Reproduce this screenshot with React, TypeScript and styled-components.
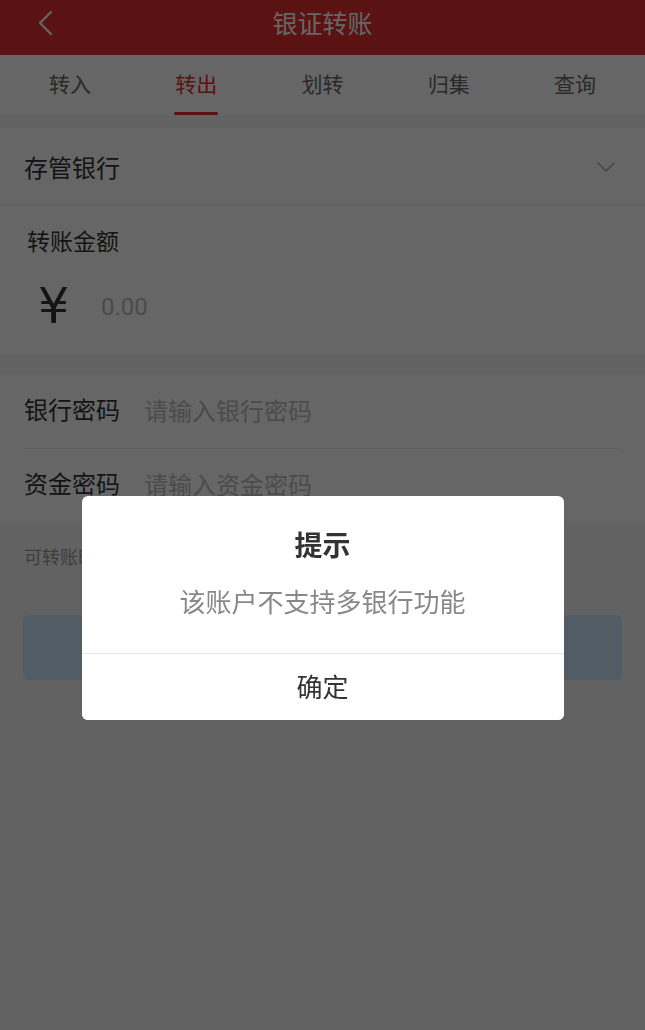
import React, { useState } from "react"
import styled, { createGlobalStyle } from "styled-components"

const tabs = ["转入", "转出", "划转", "归集", "查询"]

export default function App() {
  const [active, setActive] = useState(1)
  const [showTip, setShowTip] = useState(true)

  return (
    <>
      <GlobalStyle />
      <S.Page>
        <S.Header>
          <S.BackButton aria-label="返回">
            <svg width="16" height="26" viewBox="0 0 16 26" fill="none">
              <path d="M14 2 L3 13 L14 24" stroke="#fff" strokeWidth="2.2" strokeLinecap="round" strokeLinejoin="round" />
            </svg>
          </S.BackButton>
          <S.Title>银证转账</S.Title>
          <span />
        </S.Header>

        <S.Tabs>
          {tabs.map((t, i) => (
            <S.Tab key={t} $active={i === active} onClick={() => setActive(i)}>
              <span>{t}</span>
              <S.TabBar $active={i === active} />
            </S.Tab>
          ))}
        </S.Tabs>

        <S.BankRow>
          <S.Label>存管银行</S.Label>
          <svg width="18" height="10" viewBox="0 0 18 10" fill="none">
            <path d="M1 1 L9 9 L17 1" stroke="#aaa" strokeWidth="1.5" strokeLinecap="round" strokeLinejoin="round" />
          </svg>
        </S.BankRow>

        <S.AmountSection>
          <S.AmountLabel>转账金额</S.AmountLabel>
          <S.AmountRow>
            <S.Yen>¥</S.Yen>
            <S.AmountInput placeholder="0.00" />
          </S.AmountRow>
        </S.AmountSection>

        <S.PasswordSection>
          <S.FieldRow>
            <S.Label>银行密码</S.Label>
            <S.TextInput type="password" placeholder="请输入银行密码" />
          </S.FieldRow>
          <S.Divider />
          <S.FieldRow>
            <S.Label>资金密码</S.Label>
            <S.TextInput type="password" placeholder="请输入资金密码" />
          </S.FieldRow>
        </S.PasswordSection>

        <S.Hint>可转账时间：交易日 9:00-16:00</S.Hint>
        <S.SubmitButton disabled>转出</S.SubmitButton>
      </S.Page>

      {showTip && (
        <S.Mask>
          <S.Dialog>
            <S.DialogBody>
              <S.DialogTitle>提示</S.DialogTitle>
              <S.DialogMessage>该账户不支持多银行功能</S.DialogMessage>
            </S.DialogBody>
            <S.DialogButton onClick={() => setShowTip(false)}>确定</S.DialogButton>
          </S.Dialog>
        </S.Mask>
      )}
    </>
  )
}

const GlobalStyle = createGlobalStyle`
  html, body {
    margin: 0;
    padding: 0;
    background: #f5f5f5;
    font-family: "Noto Sans CJK SC", "Noto Sans", sans-serif;
    color: #333;
  }
  * { box-sizing: border-box; }
  input::placeholder { color: #bbb; }
`

const S = {
  Page: styled.div`
    min-height: 1030px;
    background: #f5f5f5;
    display: flex;
    flex-direction: column;
  `,
  Header: styled.header`
    height: 55px;
    background: #e02e2e;
    display: grid;
    grid-template-columns: 1fr auto 1fr;
    align-items: center;
  `,
  BackButton: styled.button`
    justify-self: start;
    margin-left: 37px;
    margin-top: -10px;
    padding: 0;
    border: none;
    background: none;
    display: flex;
  `,
  Title: styled.h1`
    margin: 0 0 12px;
    font-size: 25px;
    font-weight: 400;
    color: #fff;
  `,
  Tabs: styled.nav`
    height: 60px;
    padding: 0 7px;
    background: #fff;
    display: grid;
    grid-template-columns: repeat(5, 1fr);
  `,
  Tab: styled.div<{ $active: boolean }>`
    display: flex;
    flex-direction: column;
    align-items: center;
    padding-top: 13px;
    font-size: 21px;
    line-height: 30px;
    color: ${(p) => (p.$active ? "#e02e2e" : "#666")};
    cursor: pointer;
  `,
  TabBar: styled.i<{ $active: boolean }>`
    display: block;
    width: 44px;
    height: 3px;
    margin-top: 14px;
    border-radius: 2px;
    background: ${(p) => (p.$active ? "#e02e2e" : "transparent")};
  `,
  BankRow: styled.div`
    margin-top: 13px;
    height: 78px;
    padding: 0 30px 0 24px;
    background: #fff;
    border-bottom: 1px solid #eee;
    display: flex;
    align-items: center;
    justify-content: space-between;
  `,
  Label: styled.span`
    font-size: 24px;
    line-height: 30px;
    color: #333;
    flex-shrink: 0;
  `,
  AmountSection: styled.section`
    background: #fff;
    padding: 21px 24px 18px 27px;
  `,
  AmountLabel: styled.div`
    font-size: 23px;
    line-height: 26px;
    color: #333;
  `,
  AmountRow: styled.div`
    margin-top: 24px;
    height: 60px;
    display: flex;
    align-items: center;
  `,
  Yen: styled.span`
    width: 74px;
    padding-left: 11px;
    font-family: "DejaVu Sans", sans-serif;
    font-size: 49px;
    line-height: 60px;
    color: #333;
  `,
  AmountInput: styled.input`
    flex: 1;
    border: none;
    outline: none;
    background: none;
    padding: 0;
    font-family: Roboto, "Liberation Sans", sans-serif;
    font-size: 24px;
    color: #333;
  `,
  PasswordSection: styled.section`
    margin-top: 20px;
    background: #fff;
  `,
  FieldRow: styled.div`
    height: 73px;
    padding: 0 24px 5px;
    display: flex;
    align-items: center;
    gap: 24px;
  `,
  TextInput: styled.input`
    flex: 1;
    min-width: 0;
    border: none;
    outline: none;
    background: none;
    padding: 0;
    font-family: "Noto Sans CJK SC", sans-serif;
    font-size: 24px;
    color: #333;
  `,
  Divider: styled.hr`
    margin: 0 24px;
    border: none;
    border-top: 1px solid #e8e8e8;
  `,
  Hint: styled.p`
    margin: 22px 24px 0;
    font-size: 18px;
    line-height: 24px;
    color: #999;
  `,
  SubmitButton: styled.button`
    margin: 47px 23px 0;
    height: 65px;
    border: none;
    border-radius: 6px;
    background: #cde5fd;
    color: #fff;
    font-family: "Noto Sans CJK SC", sans-serif;
    font-size: 24px;
  `,
  Mask: styled.div`
    position: fixed;
    inset: 0;
    background: rgba(0, 0, 0, 0.6);
    display: flex;
    justify-content: center;
    align-items: flex-start;
    padding-top: 496px;
  `,
  Dialog: styled.div`
    width: 482px;
    background: #fff;
    border-radius: 6px;
    overflow: hidden;
  `,
  DialogBody: styled.div`
    padding: 29px 20px 36px;
    border-bottom: 1px solid #e5e5e5;
    text-align: center;
  `,
  DialogTitle: styled.h2`
    margin: 0;
    font-size: 28px;
    line-height: 38px;
    font-weight: 700;
    color: #333;
  `,
  DialogMessage: styled.p`
    margin: 22px 0 0;
    font-size: 26px;
    line-height: 32px;
    color: #888;
  `,
  DialogButton: styled.button`
    display: block;
    width: 100%;
    height: 66px;
    padding: 0 0 4px;
    border: none;
    background: #fff;
    font-family: "Noto Sans CJK SC", sans-serif;
    font-size: 26px;
    color: #333;
  `,
}
